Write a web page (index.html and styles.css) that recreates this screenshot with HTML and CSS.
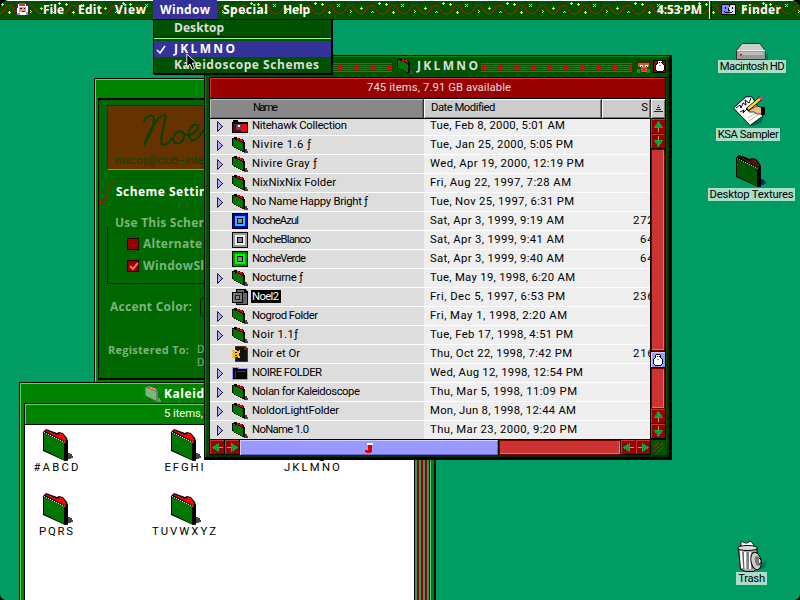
FILE: index.html
```
<!DOCTYPE html>
<html lang="en">
<head>
<meta charset="utf-8">
<title>Finder</title>
<link rel="stylesheet" href="styles.css">
</head>
<body>
<svg class="defs" width="0" height="0">
  <defs>
    <pattern id="garland" width="64" height="19" patternUnits="userSpaceOnUse">
      <path d="M-1 13.500H1L4 11 6 7 8 5.500h3L13 7l2 4 3 2.500h4L25 11l2-4 2-1.500h3L34 7l2 4 3 2.500h4L46 11l2-4 2-1.500h3L55 7l2 4 3 2.500h5" fill="none" stroke="#e00"/>
      <path d="M17 4h1v1h1v-1h1v1h-1v1h1v1h-1v-1h-1v1h-1v-1h1v-1h-1zM30 10h1v1h1v1h-1v1h-1v-1h1v-1h-1zM41 7h1v1h1v1h-1v1h-1v-1h-1v-1h1zM52 11h1v1h1v1h-1v-1h-1v1h-1v-1h1zM59 2h1v1h1v1h-1v1h-1v-1h-1v-1h1zM2 3h1v1h1v1h-1v1h-1v-1h-1v-1h1zM9 11h1v1h1v1h-1v1h-1v-1h-1v-1h1z" fill="#cf3"/>
    </pattern>
    <pattern id="treeline" x="8" width="16.3" height="13" patternUnits="userSpaceOnUse">
      <path d="M0 3.5h17M0 5.5h17M0 7.5h17M0 9.5h17M0 11.5h17" stroke="#090"/>
      <path d="M7 3h1v2h1v2h1v3H8v1H7v-1H5V7h1V5h1z" fill="#e00"/>
    </pattern>
    <symbol id="folder16" viewBox="0 0 16 16">
      <path d="M12 12h3v2h1v2h-4z" fill="#444"/>
      <path d="M0 1h2V0h3v1h3v1h3v1h1v2h1v10h-3v-1H8v-1H6v-1H4v-1H2v-1H1V9H0z" fill="#000"/>
      <path d="M1 2h2v1h3v1h2v1h2v1h1v8h-2v-1H7v-1H5v-1H3v-1H1z" fill="#070"/>
      <path d="M5 1h2v1h3v1h1v2h-1V4H8V3H5z" fill="#e00"/>
    </symbol>
    <symbol id="folder32" viewBox="0 0 32 33">
      <path d="M24 24h3v1h2v2h1v2h-2v1h-3v2h-3z" fill="#444"/>
      <path d="M0 3l3-3 11 4 2-1 4 1 4 5 1 3v19l-3 1L0 22z" fill="#000"/>
      <path d="M2 2l1-1 11 5 3-2 3 1 3 5v3z" fill="#f00"/>
      <path d="M1 4l20 9v18L1 21z" fill="#070"/>
      <path d="M1 3.500l21 10" stroke="#fff" stroke-dasharray="1.1 1.100"/>
    </symbol>
    <symbol id="tri" viewBox="0 0 7 11"><path d="M.5.5l5 5-5 5z" fill="#aaf" stroke="#224"/><path d="M1 10l5-5" stroke="#000"/></symbol>
    <symbol id="tree" viewBox="0 0 9 11"><path d="M4 0h1v1h1v2h1v1h1v2h1v1H0V6h1V4h1V3h1V1h1z" fill="#1a3"/><path d="M4 7h1v4H4z" fill="#c95"/><path d="M2 4h2v1H2zM5 5h2v1H5z" fill="#077"/></symbol>
    <symbol id="snow" viewBox="0 0 10 12"><path d="M3 0h4v1h1v3h1v1h1v5H9v1H8v1H2v-1H1v-1H0V5h1V4h1V1h1z" fill="#000"/><path d="M3 1h4v3h1v1h1v5H8v1H2v-1H1V5h1V4h1z" fill="#fff"/><path d="M4 2h1v1H4zM6 2h1v1H6z" fill="#000"/><path d="M4 5h2v1H4z" fill="#3bd"/></symbol>
  </defs>
</svg>

<header class="menubar">
  <svg class="garland" width="800" height="19" shape-rendering="crispEdges"><rect width="800" height="19" y="1" fill="url(#garland)"/></svg>
  <svg class="santa" width="13" height="13" shape-rendering="crispEdges"><path d="M0 0h13v13H0z" fill="#334"/><path d="M2 1h8v2h2v9H1V5h1z" fill="#fff"/><path d="M3 0h6v3H3z" fill="#d33"/><path d="M3 4h7v5H3z" fill="#e98"/><path d="M4 5h2v1H4zM8 5h1v1H8z" fill="#000"/><path d="M6 8h3v1H6z" fill="#c00"/><path d="M1 10h3v2H1zM10 9h2v3h-2z" fill="#99a"/></svg>
  <nav class="menus">
    <span class="m-file"><b data-w="21">File</b></span>
    <span class="m-edit"><b data-w="24">Edit</b></span>
    <span class="m-view"><b data-w="31">View</b></span>
    <span class="m-window"><b data-w="50">Window</b></span>
    <span class="m-special"><b data-w="45">Special</b></span>
    <span class="m-help"><b data-w="27">Help</b></span>
  </nav>
  <div class="status">
    <b data-w="45">4:53 PM</b>
    <i class="divider"></i>
    <svg width="15" height="14" shape-rendering="crispEdges"><path d="M0 1h15v11H0z" fill="#000"/><path d="M1 2h7l-1 6h2v3H1z" fill="#88f"/><path d="M9 2h5v9H9V7H8z" fill="#dde"/><path d="M4 4h1v2H4zM11 4h1v2h-1zM4 9h7v1H4zM3 8h1v1H3zM11 8h1v1h-1z" fill="#000"/></svg>
    <b data-w="40">Finder</b>
  </div>
</header>

<section class="panel">
  <div class="panel-body">
    <div class="banner">
      <svg width="97" height="48" fill="none" stroke="#040" stroke-width="2"><path d="M36 16c1-6 7-7 9-6 3 3-2 19-9 29 5-13 14-30 20-30 5 0-6 24-2 29 3 2 7-1 10-6M74 26c-5-2-9 3-9 7 0 5 6 6 9 2 3-3 3-8 0-9 2 3 7 4 10 2 5-2 8-7 5-9-5-2-9 5-8 11 2 8 8 4 12-2 2-3 4-6 6-7"/><path d="M83 21h2M89 21h2"/></svg>
      <span data-w="92">macos@club–inter</span>
    </div>
    <svg class="tabline" width="106" height="24" fill="none" stroke="#d00"><path d="M0 22.5h4l2-3 5-14 3-4h92"/></svg>
    <b class="p-tab" data-w="91">Scheme Settin</b>
    <div class="group">
      <b class="legend" data-w="89">Use This Scher</b>
      <label><i class="check"></i><b data-w="59">Alternate</b></label>
      <label><i class="check"><svg width="11" height="11"><path d="M2 5l3 3 5-6" fill="none" stroke="#f66" stroke-width="2"/></svg></i><b data-w="61">WindowSl</b></label>
    </div>
    <div class="accent"><b data-w="82">Accent Color:</b><i class="popup"></i></div>
    <div class="registered"><b data-w="81">Registered To:</b><span>D<br>D</span></div>
  </div>
</section>

<section class="schemes">
  <div class="schemes-title"><svg width="16" height="16" viewBox="0 0 16 16"><path d="M12 12h3v2h1v2h-4z" fill="#696"/><path d="M0 1h2V0h3v1h3v1h3v1h1v2h1v10h-3v-1H8v-1H6v-1H4v-1H2v-1H1V9H0z" fill="#777"/><path d="M1 2h2v1h3v1h2v1h2v1h1v8h-2v-1H7v-1H5v-1H3v-1H1z" fill="#7b7"/><path d="M5 1h2v1h3v1h1v2h-1V4H8V3H5z" fill="#f77"/></svg><b data-w="40">Kaleid</b></div>
  <div class="schemes-main">
    <div class="schemes-left">
      <div class="schemes-info"><span data-w="39">5 items,</span></div>
      <div class="icons">
        <div><svg width="32" height="33"><use href="#folder32"/></svg><span data-w="45">#ABCD</span></div>
        <div><svg width="32" height="33"><use href="#folder32"/></svg><span data-w="39">EFGHI</span></div>
        <div><svg width="32" height="33"><use href="#folder32"/></svg><span data-w="56">JKLMNO</span></div>
        <div><svg width="32" height="33"><use href="#folder32"/></svg><span data-w="34">PQRS</span></div>
        <div><svg width="32" height="33"><use href="#folder32"/></svg><span data-w="64">TUVWXYZ</span></div>
      </div>
    </div>
    <div class="stripes"></div>
  </div>
</section>

<section class="win">
  <div class="titlebar">
    <svg class="t-left" width="181" height="13" shape-rendering="crispEdges"><rect width="181" height="13" fill="url(#treeline)"/></svg>
    <svg class="t-icon" width="16" height="16"><use href="#folder16"/></svg>
    <b data-w="61">JKLMNO</b>
    <svg class="t-right" width="151" height="13" shape-rendering="crispEdges"><g transform="translate(4.3)"><rect x="-5" width="156" height="13" fill="url(#treeline)"/></g></svg>
    <svg class="deer" width="13" height="13" shape-rendering="crispEdges"><path d="M0 0h2v1h2V0h1v1h3V0h1v1h2V0h2v4H0z" fill="#420"/><path d="M1 3h11v4h-2v5H4V7H1z" fill="#b63"/><path d="M3 5h3v2H3zM8 5h3v2H8z" fill="#fff"/><path d="M4 6h1v1H4zM9 6h1v1H9z" fill="#000"/><path d="M5 8h4v3H5z" fill="#f22"/><path d="M10 9h3v4h-3zM0 9h3v4H0z" fill="#282"/></svg>
    <svg class="shade" width="13" height="13" shape-rendering="crispEdges"><path d="M0 0h13v13H0z" fill="#000"/><path d="M1 1h11v11H1z" fill="#a00"/><use href="#snow" x="2" y="0" width="10" height="12"/></svg>
  </div>
  <div class="info"><span data-w="144">745 items, 7.91 GB available</span></div>
  <div class="cols">
    <div class="c-name"><span data-w="25">Name</span></div>
    <div class="c-date"><span data-w="64">Date Modified</span></div>
    <div class="c-size"><span>S</span></div>
    <div class="c-sort"><svg width="9" height="9" shape-rendering="crispEdges"><path d="M4 0h1v1H4zM3 2h3v1H3zM2 4h5v1H2zM0 6h9v1H0z" fill="#222"/></svg></div>
  </div>
  <div class="view">
    <div class="list">
      <div class="row"><svg class="tri"><use href="#tri"/></svg><svg class="ic" shape-rendering="crispEdges"><path d="M0 4h1V2h5v2h10v11H0z" fill="#000"/><path d="M9 6h6v8H9z" fill="#f00"/><path d="M1 6h8v8H1z" fill="#700"/><path d="M4 6h5v6H4z" fill="#546"/><path d="M6 7h2v2H6z" fill="#fff"/></svg><span data-w="95">Nitehawk Collection</span><span class="d" data-w="135">Tue, Feb 8, 2000, 5:01 AM</span></div>
      <div class="row"><svg class="tri"><use href="#tri"/></svg><svg class="ic"><use href="#folder16"/></svg><span data-w="59">Nivire 1.6 ƒ</span><span class="d" data-w="143">Tue, Jan 25, 2000, 5:05 PM</span></div>
      <div class="row"><svg class="tri"><use href="#tri"/></svg><svg class="ic"><use href="#folder16"/></svg><span data-w="65">Nivire Gray ƒ</span><span class="d" data-w="154">Wed, Apr 19, 2000, 12:19 PM</span></div>
      <div class="row"><svg class="tri"><use href="#tri"/></svg><svg class="ic"><use href="#folder16"/></svg><span data-w="84">NixNixNix Folder</span><span class="d" data-w="141">Fri, Aug 22, 1997, 7:28 AM</span></div>
      <div class="row"><svg class="tri"><use href="#tri"/></svg><svg class="ic"><use href="#folder16"/></svg><span data-w="116">No Name Happy Bright ƒ</span><span class="d" data-w="144">Tue, Nov 25, 1997, 6:31 PM</span></div>
      <div class="row"><i class="tri"></i><i class="ic sq azul"></i><span data-w="47">NocheAzul</span><span class="d" data-w="134">Sat, Apr 3, 1999, 9:19 AM</span><span class="s">272</span></div>
      <div class="row"><i class="tri"></i><i class="ic sq blanco"></i><span data-w="59">NocheBlanco</span><span class="d" data-w="134">Sat, Apr 3, 1999, 9:41 AM</span><span class="s s2">64</span></div>
      <div class="row"><i class="tri"></i><i class="ic sq verde"></i><span data-w="54">NocheVerde</span><span class="d" data-w="134">Sat, Apr 3, 1999, 9:40 AM</span><span class="s s2">64</span></div>
      <div class="row"><svg class="tri"><use href="#tri"/></svg><svg class="ic"><use href="#folder16"/></svg><span data-w="51">Nocturne ƒ</span><span class="d" data-w="145">Tue, May 19, 1998, 6:20 AM</span></div>
      <div class="row"><i class="tri"></i><svg class="ic" shape-rendering="crispEdges"><path d="M4 0h9l3 3v13H4z" fill="#000"/><path d="M5 1h7v3h3v11H5z" fill="#666"/><path d="M0 3h11v11H0z" fill="#000"/><path d="M1 4h9v9H1z" fill="#777"/><path d="M3.5 6.500h4v4h-4z" fill="#888" stroke="#222"/></svg><span class="sel"><span data-w="27">Noel2</span></span><span class="d" data-w="135">Fri, Dec 5, 1997, 6:53 PM</span><span class="s">236</span></div>
      <div class="row"><svg class="tri"><use href="#tri"/></svg><svg class="ic"><use href="#folder16"/></svg><span data-w="66">Nogrod Folder</span><span class="d" data-w="137">Fri, May 1, 1998, 2:20 AM</span></div>
      <div class="row"><svg class="tri"><use href="#tri"/></svg><svg class="ic"><use href="#folder16"/></svg><span data-w="46">Noir 1.1ƒ</span><span class="d" data-w="143">Tue, Feb 17, 1998, 4:51 PM</span></div>
      <div class="row"><i class="tri"></i><svg class="ic" shape-rendering="crispEdges"><path d="M3 0h10l3 3v13H3z" fill="#630"/><path d="M4 1h8v3h3v11H4z" fill="#111"/><path d="M0 4h2v1h1V4h2v1h2V4h1v3H7v3h1v2H6v-1H3v1H0v-2h1V9H0V7h1V6H0z" fill="#fb0"/><path d="M3 6h2v1H3zM3 9h2v1H3z" fill="#000"/></svg><span data-w="48">Noir et Or</span><span class="d" data-w="142">Thu, Oct 22, 1998, 7:42 PM</span><span class="s">216</span></div>
      <div class="row"><svg class="tri"><use href="#tri"/></svg><svg class="ic" shape-rendering="crispEdges"><path d="M0 2h7v1h9v12H0z" fill="#99f"/><path d="M1 3h5v1h9v10H1z" fill="#000"/><path d="M3 6h1v7H3zM5 6h9v1H5z" fill="#444"/></svg><span data-w="70">NOIRE FOLDER</span><span class="d" data-w="153">Wed, Aug 12, 1998, 12:54 PM</span></div>
      <div class="row"><svg class="tri"><use href="#tri"/></svg><svg class="ic"><use href="#folder16"/></svg><span data-w="108">Nolan for Kaleidoscope</span><span class="d" data-w="147">Thu, Mar 5, 1998, 11:09 PM</span></div>
      <div class="row"><svg class="tri"><use href="#tri"/></svg><svg class="ic"><use href="#folder16"/></svg><span data-w="87">NoldorLightFolder</span><span class="d" data-w="146">Mon, Jun 8, 1998, 12:44 AM</span></div>
      <div class="row"><svg class="tri"><use href="#tri"/></svg><svg class="ic"><use href="#folder16"/></svg><span data-w="57">NoName 1.0</span><span class="d" data-w="147">Thu, Mar 23, 2000, 9:20 PM</span></div>
    </div>
    <div class="vscroll">
      <div class="btn up"><svg width="9" height="11" shape-rendering="crispEdges"><use href="#tree"/></svg></div>
      <div class="btn down"><svg width="9" height="11" shape-rendering="crispEdges"><use href="#tree"/></svg></div>
      <div class="track t1"></div>
      <div class="vthumb"><svg width="10" height="12" shape-rendering="crispEdges"><use href="#snow"/></svg></div>
      <div class="track t2"></div>
      <div class="btn up"><svg width="9" height="11" shape-rendering="crispEdges"><use href="#tree"/></svg></div>
      <div class="btn down"><svg width="9" height="11" shape-rendering="crispEdges"><use href="#tree"/></svg></div>
    </div>
  </div>
  <div class="hscroll">
    <div class="btn left"><svg width="9" height="11"><use href="#tree"/></svg></div>
    <div class="btn right"><svg width="9" height="11"><use href="#tree"/></svg></div>
    <div class="hthumb"><svg width="8" height="10" shape-rendering="crispEdges"><path d="M2 0h6v2H2z" fill="#fff"/><path d="M3 2h4v7H6v1H1V9H0V7h3z" fill="#d00"/></svg></div>
    <div class="track"></div>
    <div class="btn left"><svg width="9" height="11"><use href="#tree"/></svg></div>
    <div class="btn right"><svg width="9" height="11"><use href="#tree"/></svg></div>
    <div class="grow"><svg width="14" height="14"><path d="M3 7l5-4M3 11l9-8M6 13l6-6" stroke="#b22" stroke-width="1"/></svg></div>
  </div>
</section>

<div class="dropdown">
  <div class="item"><b data-w="50">Desktop</b></div>
  <div class="rule"></div>
  <div class="item on"><svg width="10" height="9"><path d="M1 5l3 3 5-7" fill="none" stroke="#fff" stroke-width="1.6"/></svg><b data-w="61">JKLMNO</b></div>
  <div class="item"><b data-w="145">Kaleidoscope Schemes</b></div>
</div>
<svg class="pointer" width="12" height="18"><path d="M.8 1v13l3-3 2.500 5.500 2.300-1L6.300 10H10.500z" fill="#000" stroke="#fff" stroke-width=".9"/></svg>

<div class="desk hd"><svg width="32" height="18"><path d="M25 17h7v-7z" fill="#075"/><path d="M6 .5h18l5 7v9H.5v-9z" fill="#ccc" stroke="#333"/><path d="M1 8h28v8H1z" fill="#999"/><path d="M1 7.500h28" stroke="#eee"/><path d="M3 9h24v3H3z" fill="#bbb"/><path d="M4 11h2v1H4z" fill="#c00"/><path d="M4 12h2v1H4z" fill="#0c0"/></svg><span data-w="65">Macintosh HD</span></div>
<div class="desk ksa"><svg width="32" height="31"><path d="M17 29l14-8-3 6-8 3z" fill="#065"/><path d="M.5 12L13 .8h6L30 20 17 29.500z" fill="#fff" stroke="#000"/><path d="M3 12l4-3 1 3 2-5 3 2-1-5 4 3 2-5M7 16l4-2-1 3 5-5" stroke="#000" fill="none"/><path d="M15 22l9-6M16 25l9-6" stroke="#bbb"/><path d="M16 14l8-4 7 2v6l-7 0-3-2-5 0z" fill="#eb8" stroke="#000" stroke-width=".7"/><path d="M28 11h4v8h-4z" fill="#000"/><path d="M14 14L28 2" stroke="#000" stroke-width="4"/><path d="M15 13L28 2" stroke="#fd3" stroke-width="2.400"/><path d="M27 3l2-2" stroke="#e36" stroke-width="3"/></svg><span data-w="61">KSA Sampler</span></div>
<div class="desk tex"><svg width="32" height="33" viewBox="0 0 32 33"><path d="M24 24h3v1h2v2h1v2h-2v1h-3v2h-3z" fill="#035"/><path d="M0 3l3-3 11 4 2-1 4 1 4 5 1 3v19l-3 1L0 22z" fill="#000"/><path d="M2 2l1-1 11 5 3-2 3 1 3 5v3z" fill="#511"/><path d="M1 4l20 9v18L1 21z" fill="#050"/><path d="M1 3.500l21 10" stroke="#9df" stroke-dasharray="1.1 1.100"/></svg><span data-w="84">Desktop Textures</span></div>
<div class="desk trash"><svg width="32" height="32"><path d="M22 26l9-6-2 8-9 2z" fill="#075"/><path d="M2.500 9l2 20 5 2.500h8l3-3L21 9z" fill="#aaa" stroke="#000"/><path d="M5 11l1 17M9 12v17M14 12v17" stroke="#fff" stroke-width="2"/><path d="M7 12l1 17M12 12v17M17 12l-1 17" stroke="#555"/><path d="M5 7V1l4 2 2 0 4-2 4 6z" fill="#fff" stroke="#222"/><ellipse cx="11.500" cy="8" rx="10" ry="2.500" fill="#ddd" stroke="#000"/><ellipse cx="20" cy="21" rx="5" ry="9" transform="rotate(-12 20 21)" fill="#ccc" stroke="#000"/><ellipse cx="21.500" cy="21" rx="2.500" ry="5" transform="rotate(-12 21 21)" fill="#777"/><path d="M23 18l2 2v3l-2 1" stroke="#000" fill="#fff"/></svg><span data-w="27">Trash</span></div>
<svg class="corners" width="800" height="600"><path d="M0 0h8Q1 1 0 8zM800 0h-8q7 1 8 8zM0 600v-5q1 4 5 5zM800 600v-5q-1 4-5 5z" fill="#000"/></svg>
<script src="fit.js"></script>
</body>
</html>
```
FILE: styles.css
```
*, *::before { box-sizing: border-box; }
html, body { margin: 0; height: 100%; overflow: hidden; }
body { background: #009c63; font: 11.3px/14px Roboto, sans-serif; color: #000; position: relative; width: 800px; height: 600px; }
b { font-family: "Open Sans", "Noto Sans", sans-serif; font-weight: 700; font-size: 12px; }
span, b { white-space: nowrap; }
i { display: block; }
svg { display: block; flex: none; }
.defs { position: absolute; }
.corners { position: absolute; left: 0; top: 0; z-index: 9; pointer-events: none; }

.menubar { position: relative; height: 20px; background: #005200; border-top: 1px solid #fff; border-bottom: 1px solid #000; display: flex; justify-content: space-between; color: #fff; line-height: 18px; }
.garland { position: absolute; left: 0; top: -1px; }
.santa { position: absolute; left: 16px; top: 2px; }
.menus { display: flex; padding-left: 43px; z-index: 1; }
.menus span { display: block; height: 18px; }
.m-file { width: 35px; }
.m-edit { width: 37px; }
.m-view { width: 38px; }
.menus .m-window { width: 64px; padding-left: 7px; background: #339; height: 19px; margin-top: -1px; padding-top: 1px; }
.m-special { width: 60px; padding-left: 6px; }
.m-help { padding-left: 6px; }
.status { display: flex; width: 143px; z-index: 1; align-items: center; }
.status b:first-child { width: 52px; }
.divider { width: 3px; height: 18px; border-left: 1px solid #fff; border-right: 1px solid #000; background: #050; margin-right: 9px; }
.status svg { margin-right: 5px; }

.dropdown { position: absolute; z-index: 5; left: 153px; top: 19px; width: 179px; height: 55px; border: 1px solid #000; background: #005200; box-shadow: 1px 1px 0 #000; color: #ddd; }
.item { height: 16px; line-height: 16px; padding-left: 20px; display: flex; }
.rule { height: 5px; border-bottom: 2px solid #005200; background: linear-gradient(#003800 2px, #8f8 2px); }
.on { background: #339; color: #fff; padding-left: 2px; align-items: center; height: 16px; }
.on svg { margin-right: 8px; }
.pointer { position: absolute; z-index: 6; left: 186px; top: 53px; }

.panel { position: absolute; left: 94px; top: 78px; width: 115px; height: 305px; background: #008400; border: 1px solid #000; box-shadow: inset 1px 1px #7c7; padding: 19px 0 3px 3px; overflow: hidden; color: #7cb37c; }
.panel-body { height: 282px; background: #060; border: 2px solid #000; border-left-width: 1px; border-right: 0; padding: 5px 0 0 8px; }
.banner { width: 110px; height: 65px; background: #630; border: 1px solid #420; border-bottom-color: #6a6; color: #040; }
.banner > span { display: block; padding-left: 7px; line-height: 14px; font-size: 11px; }
.tabline { margin: 10px 0 0 -8px; }
.p-tab { display: block; color: #fff; margin: -20px 0 0 9px; line-height: 16px; }
.group { position: relative; margin: 27px 0 0; height: 57px; border: 1px solid #300; border-top: 0; width: 110px; padding: 10px 0 0 19px; }
.legend { position: absolute; left: 7px; top: -12px; line-height: 16px; }
.group label { display: flex; height: 22px; align-items: center; gap: 4px; margin-top: -4px; margin-bottom: 4px; }
.check { width: 12px; height: 12px; background: #900; border: 1px solid #200; flex: none; }
.accent { display: flex; height: 20px; margin: 13px 0 0 3px; gap: 8px; align-items: center; }
.accent b { width: 82px; }
.popup { width: 20px; height: 20px; border: 1px solid #020; border-radius: 4px; }
.registered { display: flex; margin: 18px 0 0 -8px; border-top: 1px solid #c00; padding: 7px 0 0 9px; gap: 8px; line-height: 13px; }
.registered b { width: 81px; font-size: 11px; }

.schemes { position: absolute; left: 19px; top: 382px; width: 417px; height: 218px; background: #008400; border: 1px solid #000; border-right-width: 2px; border-bottom: 0; box-shadow: inset 1px 1px #6c6; padding: 1px 3px 0 4px; overflow: hidden; color: #fff; }
.schemes-title { height: 19px; display: flex; align-items: center; padding-left: 121px; gap: 3px; line-height: 16px; }
.schemes-main { display: flex; height: 200px; border-right: 1px solid #6c6; }
.schemes-left { width: 391px; border-left: 1px solid #000; background: #fff; }
.schemes-info { height: 22px; background: #008400; border: 1px solid #000; border-width: 1px 0; box-shadow: inset 1px 1px #6c6; line-height: 20px; padding-left: 139px; }
.stripes { width: 16px; border: 1px solid #000; background: repeating-linear-gradient(90deg, #396 0 2px, #900 2px 4px); }
.icons { display: grid; grid-template-columns: repeat(3, 128px); grid-auto-rows: 64px; margin-left: -32px; padding-top: 4px; color: #000; }
.icons div { display: flex; flex-direction: column; align-items: center; }
.icons svg { margin-left: 3px; }
.icons span { line-height: 11px; }

.win { position: absolute; left: 204px; top: 55px; width: 468px; height: 405px; background: #005200; border: 1px solid #000; border-width: 1px 3px 3px 1px; padding-left: 4px; box-shadow: inset 1px 1px #080, inset -2px -2px #030; overflow: hidden; }
.titlebar { height: 20px; display: flex; align-items: center; color: #ddd; }
.t-left { margin-left: 2px; }
.t-icon { margin: 0 4px 0 5px; }
.titlebar b { width: 62px; margin-right: 2px; }
.deer { margin: 0 3px 0 5px; }
.info { width: 457px; height: 22px; margin-top: 1px; background: #900; border: 1px solid #000; box-shadow: inset 1px 1px #d33; color: #edd; line-height: 20px; padding-left: 157px; }
.cols { display: flex; width: 457px; height: 20px; line-height: 18px; background: #ccc; border: 1px solid #000; border-top: 0; }
.cols > div { box-shadow: inset 1px 1px #fff, inset -1px -1px #777; border-right: 1px solid #333; }
.cols .c-name { width: 214px; background: #888; box-shadow: inset 1px 1px #bbb, inset -1px -1px #666; padding-left: 43px; }
.cols .c-date { width: 178px; padding-left: 7px; }
.cols .c-size { width: 49px; text-align: right; padding-right: 2px; }
.cols .c-sort { flex: 1; border: 0; padding: 6px 0 0 3px; }
.view { display: flex; width: 457px; height: 321px; border: 1px solid #000; border-width: 0 1px 1px; }
.list { width: 440px; height: 320px; overflow: hidden; background: linear-gradient(90deg, #ddd 214px, #eee 214px); }
.row { height: 19px; border-bottom: 1px solid #fff; line-height: 17px; display: grid; grid-template-columns: 15px 20px 178px 203px 20px; align-items: center; padding-left: 7px; white-space: nowrap; }
.row > span { margin-top: -1px; }
.row:first-child { margin-top: -2px; }
.row .tri { width: 7px; height: 11px; }
.row .ic { width: 16px; height: 16px; }
.sq { border: 1px solid #000; display: grid; background: #999; }
.sq::before { content: ""; width: 6px; height: 6px; background: #888; border: 1px solid #000; place-self: center; box-shadow: 0 0 0 2px #eee; }
.azul { background: #00c; }
.azul::before { box-shadow: 0 0 0 2px #3bf; }
.verde { background: #090; }
.verde::before { box-shadow: 0 0 0 2px #0f0; }
.sel { background: #000; color: #fff; justify-self: start; margin-left: -1px; padding: 0 1px; line-height: 13px; width: 30px; }
.s { letter-spacing: .8px; }
.s2 { padding-left: 7px; }
.vscroll { width: 15px; border-left: 1px solid #000; }
.btn { width: 15px; height: 15px; background: #900; border: 1px solid #000; border-width: 0 1px 1px 0; box-shadow: inset 1px 1px #c33; display: flex; align-items: center; justify-content: center; flex: none; }
.down svg { transform: scaleY(-1); }
.left svg { transform: rotate(-90deg); }
.right svg { transform: rotate(90deg); }
.track { background: #c33; border: 1px solid #700; box-shadow: inset -1px -1px #f66; }
.t1 { height: 202px; }
.t2 { height: 41px; }
.vthumb { height: 17px; border: 1px solid #000; border-width: 1px 0; background: #99f; box-shadow: inset 1px 1px #ccf; display: flex; justify-content: center; padding-top: 2px; }
.hscroll { display: flex; width: 457px; height: 15px; border-left: 1px solid #000; }
.hthumb { width: 259px; background: #99f; border-right: 1px solid #000; box-shadow: inset 1px 1px #ccf, inset -1px -1px #66c; display: flex; align-items: center; justify-content: center; }
.hscroll .track { width: 122px; border-right: 1px solid #000; }
.grow { background: #005200; }

.desk { position: absolute; display: flex; flex-direction: column; align-items: center; }
.desk span { background: #a9dfc9; line-height: 13px; height: 13px; padding: 0 2px; }
.hd { left: 717px; top: 43px; width: 70px; }
.hd svg { height: 17px; }
.ksa { left: 714px; top: 96px; width: 68px; }
.ksa svg { height: 32px; margin-left: 2px; }
.tex { left: 707px; top: 155px; width: 89px; }
.trash { left: 735px; top: 540px; width: 33px; }
```
FILE: fit.js
```
// Spread each label's letters over the pixel width stored with it.
document.querySelectorAll("[data-w]").forEach(function (el) {
  var range = document.createRange();
  range.selectNodeContents(el);
  var natural = range.getBoundingClientRect().width;
  var gaps = el.textContent.length - 1;
  el.style.letterSpacing = ((el.dataset.w - natural) / gaps).toFixed(3) + "px";
});
```
